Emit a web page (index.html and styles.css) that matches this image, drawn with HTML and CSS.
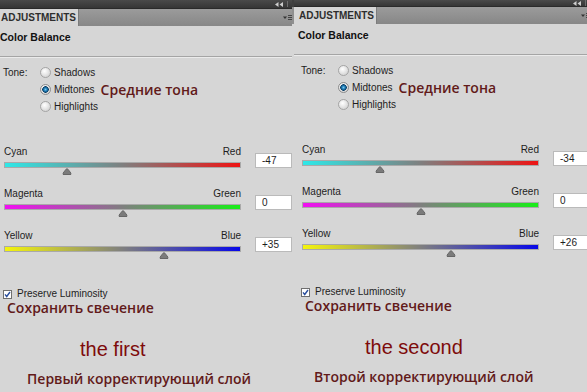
FILE: index.html
```html
<!DOCTYPE html>
<html lang="ru">
<head>
  <meta charset="UTF-8" />
  <meta name="viewport" content="width=device-width, initial-scale=1.0" />
  <title>Color Balance</title>
  <link rel="stylesheet" href="styles.css">
</head>
<body>

  <div class="screen">

    <section class="panel panel-first">
      <div class="panel-inner">
        <div class="topbar">
          <svg class="collapse" width="8" height="5" viewBox="0 0 8 5"><path d="M0 2.5L3.5 0v5zM4.5 2.5L8 0v5z" fill="#cdcdcd"/></svg>
          <span class="grip"></span>
        </div>
        <div class="tabbar">
          <div class="tab">ADJUSTMENTS</div>
          <svg class="menu" width="9" height="6" viewBox="0 0 9 6"><path d="M0 1.5h4L2 4z" fill="#333"/><path d="M5 .5h4M5 2.5h4M5 4.5h4" stroke="#444"/></svg>
        </div>
        <div class="body">
          <h2 class="title">Color Balance</h2>
          <hr class="rule">
          <div class="tone">
            <span class="tone-label">Tone:</span>
            <ul class="radios">
              <li><span class="radio"></span>Shadows</li>
              <li><span class="radio is-on"></span>Midtones <span class="note">Средние тона</span></li>
              <li><span class="radio"></span>Highlights</li>
            </ul>
          </div>
          <div class="sliders">
            <div class="slider">
              <div class="track">
                <div class="ends"><span>Cyan</span><span>Red</span></div>
                <div class="bar bar-cyan"></div>
                <div class="thumb-row"><svg class="thumb" style="left: 26.5%" width="9" height="7" viewBox="0 0 9 7"><path d="M.5 6.5V5.2L3.6 1.2Q4.5.2 5.4 1.2L8.5 5.2V6.5Z" fill="#7b7b7b" stroke="#666"/></svg></div>
              </div>
              <div class="value">-47</div>
            </div>
            <div class="slider">
              <div class="track">
                <div class="ends"><span>Magenta</span><span>Green</span></div>
                <div class="bar bar-magenta"></div>
                <div class="thumb-row"><svg class="thumb" style="left: 50%" width="9" height="7" viewBox="0 0 9 7"><path d="M.5 6.5V5.2L3.6 1.2Q4.5.2 5.4 1.2L8.5 5.2V6.5Z" fill="#7b7b7b" stroke="#666"/></svg></div>
              </div>
              <div class="value">0</div>
            </div>
            <div class="slider">
              <div class="track">
                <div class="ends"><span>Yellow</span><span>Blue</span></div>
                <div class="bar bar-yellow"></div>
                <div class="thumb-row"><svg class="thumb" style="left: 67.5%" width="9" height="7" viewBox="0 0 9 7"><path d="M.5 6.5V5.2L3.6 1.2Q4.5.2 5.4 1.2L8.5 5.2V6.5Z" fill="#7b7b7b" stroke="#666"/></svg></div>
              </div>
              <div class="value">+35</div>
            </div>
          </div>
          <div class="preserve">
            <svg width="9" height="9" viewBox="0 0 9 9"><rect x=".5" y=".5" width="8" height="8" fill="#fff" stroke="#6f6f6f"/><path d="M2 4.4l1.7 2.1L7 2" fill="none" stroke="#2b4f9e" stroke-width="1.4"/></svg>
            Preserve Luminosity
          </div>
          <p class="note note-preserve">Сохранить свечение</p>
          <p class="caption">the first</p>
          <p class="note layer-name">Первый корректирующий слой</p>
        </div>
      </div>
    </section>

    <section class="panel panel-second">
      <div class="panel-inner">
        <div class="topbar">
          <svg class="collapse" width="8" height="5" viewBox="0 0 8 5"><path d="M0 2.5L3.5 0v5zM4.5 2.5L8 0v5z" fill="#cdcdcd"/></svg>
          <span class="grip"></span>
        </div>
        <div class="tabbar">
          <div class="tab">ADJUSTMENTS</div>
          <svg class="menu" width="9" height="6" viewBox="0 0 9 6"><path d="M0 1.5h4L2 4z" fill="#333"/><path d="M5 .5h4M5 2.5h4M5 4.5h4" stroke="#444"/></svg>
        </div>
        <div class="body">
          <h2 class="title">Color Balance</h2>
          <hr class="rule">
          <div class="tone">
            <span class="tone-label">Tone:</span>
            <ul class="radios">
              <li><span class="radio"></span>Shadows</li>
              <li><span class="radio is-on"></span>Midtones <span class="note">Средние тона</span></li>
              <li><span class="radio"></span>Highlights</li>
            </ul>
          </div>
          <div class="sliders">
            <div class="slider">
              <div class="track">
                <div class="ends"><span>Cyan</span><span>Red</span></div>
                <div class="bar bar-cyan"></div>
                <div class="thumb-row"><svg class="thumb" style="left: 33%" width="9" height="7" viewBox="0 0 9 7"><path d="M.5 6.5V5.2L3.6 1.2Q4.5.2 5.4 1.2L8.5 5.2V6.5Z" fill="#7b7b7b" stroke="#666"/></svg></div>
              </div>
              <div class="value">-34</div>
            </div>
            <div class="slider">
              <div class="track">
                <div class="ends"><span>Magenta</span><span>Green</span></div>
                <div class="bar bar-magenta"></div>
                <div class="thumb-row"><svg class="thumb" style="left: 50%" width="9" height="7" viewBox="0 0 9 7"><path d="M.5 6.5V5.2L3.6 1.2Q4.5.2 5.4 1.2L8.5 5.2V6.5Z" fill="#7b7b7b" stroke="#666"/></svg></div>
              </div>
              <div class="value">0</div>
            </div>
            <div class="slider">
              <div class="track">
                <div class="ends"><span>Yellow</span><span>Blue</span></div>
                <div class="bar bar-yellow"></div>
                <div class="thumb-row"><svg class="thumb" style="left: 63%" width="9" height="7" viewBox="0 0 9 7"><path d="M.5 6.5V5.2L3.6 1.2Q4.5.2 5.4 1.2L8.5 5.2V6.5Z" fill="#7b7b7b" stroke="#666"/></svg></div>
              </div>
              <div class="value">+26</div>
            </div>
          </div>
          <div class="preserve">
            <svg width="9" height="9" viewBox="0 0 9 9"><rect x=".5" y=".5" width="8" height="8" fill="#fff" stroke="#6f6f6f"/><path d="M2 4.4l1.7 2.1L7 2" fill="none" stroke="#2b4f9e" stroke-width="1.4"/></svg>
            Preserve Luminosity
          </div>
          <p class="note note-preserve">Сохранить свечение</p>
          <p class="caption">the second</p>
          <p class="note layer-name">Второй корректирующий слой</p>
        </div>
      </div>
    </section>

  </div>

</body>
</html>
```

FILE: styles.css
```css
body {
  margin: 0;
  background: #d6d6d6;
  font-family: "Liberation Sans", Arial, sans-serif;
  font-size: 10px;
  color: #1d1d1d;
}
.screen {
  display: flex;
  width: 587px;
  height: 392px;
  overflow: hidden;
}
.panel {
  flex: none;
  height: 392px;
  overflow: hidden;
  background: #d6d6d6;
}
.panel-first {
  width: 292px;
}
.panel-second {
  width: 295px;
  background: linear-gradient(#3f3f3f 0 7px, #8f8f8f 7px 24px, #d6d6d6 24px);
}
.panel-inner {
  width: 296px;
  background: #d6d6d6;
}
.panel-first .panel-inner {
  margin-left: -4px;
}
.panel-second .panel-inner {
  margin-left: 2px;
}
.topbar {
  height: 9px;
  display: flex;
  justify-content: flex-end;
  align-items: center;
  gap: 4px;
  padding-right: 4px;
  box-sizing: border-box;
  background: linear-gradient(#4a4a4a, #363636);
  border-bottom: 1px solid #2a2a2a;
}
.panel-second .topbar {
  height: 7px;
}
.grip {
  width: 1px;
  height: 6px;
  background: #6e6e6e;
}
.tabbar {
  height: 17px;
  display: flex;
  align-items: center;
  background: linear-gradient(#9b9b9b, #878787);
}
.tab {
  align-self: stretch;
  width: 83px;
  padding-left: 5px;
  box-sizing: border-box;
  background: #d6d6d6;
  border-right: 1px solid #7c7c7c;
  font-size: 10px;
  font-weight: bold;
  line-height: 17px;
  color: #2e2e2e;
}
.menu {
  margin-left: auto;
}
.body {
  padding-top: 4px;
}
.title {
  margin: 0;
  padding-left: 4px;
  font-size: 10.5px;
  line-height: 14px;
  font-weight: bold;
  color: #111;
}
.rule {
  height: 0;
  margin: 12px 0 0;
  border: 0;
  border-top: 1px solid #a5a5a5;
  border-bottom: 1px solid #ebebeb;
}
.tone {
  display: flex;
  margin-top: 6px;
  padding-left: 7px;
}
.tone-label {
  width: 37px;
  line-height: 17px;
}
.radios {
  margin: 0;
  padding: 0;
  list-style: none;
}
.radios li {
  display: flex;
  align-items: center;
  gap: 3px;
  height: 17px;
}
.radio {
  width: 11px;
  height: 11px;
  box-sizing: border-box;
  border-radius: 50%;
  border: 1px solid #a4a4a4;
  background: radial-gradient(circle at 40% 35%, #ffffff, #d9d9d9 70%);
}
.radio.is-on {
  border-color: #8c8c8c;
  background:
    radial-gradient(circle, #7cc8ef 0, #1e7fb9 1.6px, #0b3e66 3px, transparent 3.5px),
    radial-gradient(circle at 40% 35%, #ffffff, #d9d9d9 70%);
}
.note {
  font-family: "Open Sans", "Liberation Sans", sans-serif;
  font-weight: 600;
  font-size: 14px;
  color: #621a1a;
}
.radios .note {
  margin-left: 3px;
  line-height: 17px;
}
.sliders {
  display: flex;
  flex-direction: column;
  gap: 13px;
  margin-top: 31px;
  padding-left: 8px;
}
.slider {
  display: flex;
  align-items: flex-start;
  gap: 14px;
}
.track {
  width: 237px;
}
.ends {
  display: flex;
  justify-content: space-between;
  line-height: 12px;
}
.bar {
  height: 6px;
  margin-top: 4px;
  box-sizing: border-box;
  border: 1px solid #a9a9a9;
}
.bar-cyan {
  background: linear-gradient(to right, #2ee8e8, #7f7f7f 50%, #ee1414);
}
.bar-magenta {
  background: linear-gradient(to right, #f20ef2, #7f7f7f 50%, #18ee18);
}
.bar-yellow {
  background: linear-gradient(to right, #f4f40c, #7f7f7f 50%, #0808e8);
}
.thumb-row {
  position: relative;
  height: 7px;
}
.thumb {
  position: absolute;
  top: 0;
  transform: translateX(-50%);
}
.value {
  width: 37px;
  height: 15px;
  margin-top: 7px;
  padding-left: 6px;
  box-sizing: border-box;
  background: #fff;
  border: 1px solid #bababa;
  line-height: 13px;
}
.preserve {
  display: flex;
  align-items: center;
  gap: 5px;
  height: 10px;
  margin-top: 30px;
  padding-left: 7px;
  line-height: 10px;
}
.note-preserve {
  margin: 0;
  padding-left: 11px;
  line-height: 18px;
}
.caption {
  margin: 20px 0 0;
  font-size: 20px;
  line-height: 24px;
  color: #7e0b0b;
}
.panel-first .caption {
  padding-left: 84px;
}
.panel-second .caption {
  padding-left: 71px;
}
.layer-name {
  margin: 9px 0 0;
  line-height: 18px;
}
.panel-first .layer-name {
  padding-left: 31px;
}
.panel-second .layer-name {
  padding-left: 20px;
}
```
